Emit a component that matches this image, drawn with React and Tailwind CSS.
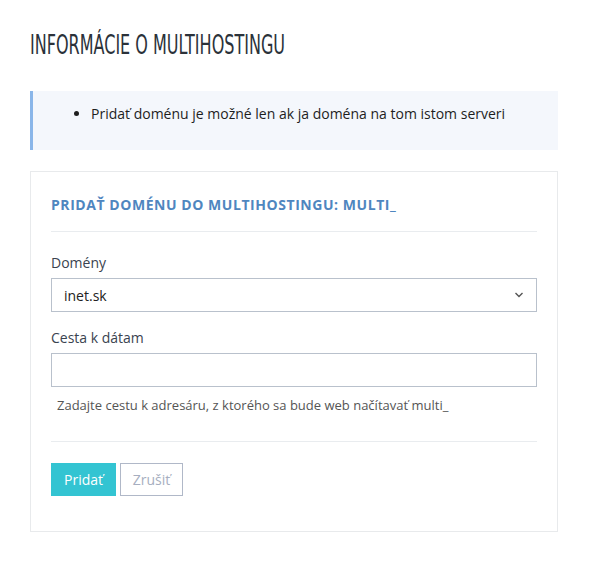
import React from 'react';

export default function App() {
  return (
    <div className="min-h-[575px] bg-white px-[30px] pt-[31px] font-['Open_Sans',sans-serif] text-[#222]">
      <h1 className="h-[28px] whitespace-nowrap text-[27px] leading-[28px] text-[#2b323a] font-['DejaVu_Sans_Condensed',sans-serif] scale-x-[0.66] origin-left">
        INFORMÁCIE O MULTIHOSTINGU
      </h1>

      <div className="mt-[32px] h-[59px] w-[528px] border-l-[3px] border-[#8ab6e9] bg-[#f4f7fc] pl-[44px] pt-[13px]">
        <ul className="list-disc pl-[14px] text-[14px] leading-[20px] text-[#1e1e1e]">
          <li>Pridať doménu je možné len ak ja doména na tom istom serveri</li>
        </ul>
      </div>

      <div className="mt-[21px] h-[361px] w-[528px] border border-[#e8eaec] px-[20px] pt-[23px]">
        <h2 className="text-[14px] font-bold leading-[20px] tracking-[0.55px] text-[#4f86bf]">
          PRIDAŤ DOMÉNU DO MULTIHOSTINGU: MULTI_
        </h2>
        <div className="mt-[16px] border-t border-[#e9ecef]" />

        <div className="mt-[21px] text-[14px] leading-[20px] text-[#3a4350]">Domény</div>
        <div className="mt-[5px] flex h-[34px] items-center justify-between border border-[#b9c1cc] pl-[12px] pr-[12px]">
          <span className="text-[14px] text-[#222]">inet.sk</span>
          <svg width="10" height="6" viewBox="0 0 10 6" fill="none" stroke="#555" strokeWidth="1.4">
            <path d="M1.5 1 L5 4.5 L8.5 1" />
          </svg>
        </div>

        <div className="mt-[16px] text-[14px] leading-[20px] text-[#3a4350]">Cesta k dátam</div>
        <div className="mt-[5px] h-[34px] border border-[#b9c1cc]" />
        <div className="mt-[9px] pl-[6px] text-[13px] leading-[18px] text-[#555]">
          Zadajte cestu k adresáru, z ktorého sa bude web načítavať multi_
        </div>

        <div className="mt-[27px] border-t border-[#e9ecef]" />

        <div className="mt-[21px] flex gap-[4px]">
          <button className="h-[33px] w-[65px] bg-[#33c4d2] text-[14px] text-white">Pridať</button>
          <button className="h-[33px] w-[63px] border border-[#b0b8c8] text-[14px] text-[#a6aec0]">Zrušiť</button>
        </div>
      </div>
    </div>
  );
}
